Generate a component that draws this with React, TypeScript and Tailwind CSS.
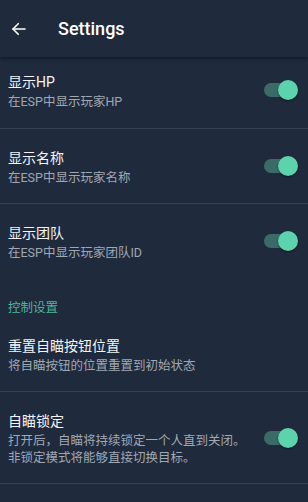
import React, { useState } from 'react';

const font = { fontFamily: 'Roboto, "Noto Sans CJK SC", sans-serif' };

type Item = { title: string; desc: string[]; toggle?: boolean; divider?: boolean; first?: boolean };

const Toggle = ({ on, onClick }: { on: boolean; onClick: () => void }) => (
  <button onClick={onClick} className="relative w-[34px] h-[20px] shrink-0 mr-[10px]">
    <span className={`absolute left-0 right-[2px] top-[3px] h-[14px] rounded-full ${on ? 'bg-[#3b6b68]' : 'bg-[#4b5563]'}`} />
    <span
      className={`absolute top-0 w-[20px] h-[20px] rounded-full shadow-[0_1px_2px_rgba(0,0,0,0.5)] ${on ? 'right-0 bg-[#5dd3ad]' : 'left-0 bg-[#d1d5db]'}`}
    />
  </button>
);

const Row = ({ item }: { item: Item }) => {
  const [on, setOn] = useState(true);
  return (
    <div className={`flex items-center pl-2 ${item.first ? 'pt-[13px]' : 'pt-[17px]'} pb-[17px] ${item.divider ? 'border-b border-[#334155]' : ''}`}>
      <div className="flex-1 min-w-0">
        <div className="text-[14px] leading-[24px] text-[#f3f5f8]">{item.title}</div>
        {item.desc.map((d) => (
          <div key={d} className="text-[12.5px] leading-[16.5px] text-[#a0a8b4]">{d}</div>
        ))}
      </div>
      {item.toggle && <Toggle on={on} onClick={() => setOn(!on)} />}
    </div>
  );
};

export default function App() {
  return (
    <div style={font} className="w-[308px] h-[502px] overflow-hidden bg-[#1f2a3d]">
      <div className="h-[57px] flex items-center bg-[#1f2a3d] shadow-[0_2px_3px_rgba(0,0,0,0.35)] relative z-10">
        <svg width="18" height="18" viewBox="0 0 24 24" className="ml-[10px]" fill="none" stroke="#fff" strokeWidth="2.2" strokeLinecap="round" strokeLinejoin="round">
          <path d="M20 12H4" />
          <path d="M11 5l-7 7 7 7" />
        </svg>
        <span className="ml-[30px] text-[18px] font-medium text-white">Settings</span>
      </div>
      <Row item={{ title: '显示HP', desc: ['在ESP中显示玩家HP'], toggle: true, divider: true, first: true }} />
      <Row item={{ title: '显示名称', desc: ['在ESP中显示玩家名称'], toggle: true, divider: true }} />
      <Row item={{ title: '显示团队', desc: ['在ESP中显示玩家团队ID'], toggle: true }} />
      <div className="pl-2 pt-[20px] text-[12.5px] leading-[18px] text-[#4fb39a]">控制设置</div>
      <Row item={{ title: '重置自瞄按钮位置', desc: ['将自瞄按钮的位置重置到初始状态'], divider: true }} />
      <Row item={{ title: '自瞄锁定', desc: ['打开后，自瞄将持续锁定一个人直到关闭。', '非锁定模式将能够直接切换目标。'], toggle: true, divider: true }} />
    </div>
  );
}
